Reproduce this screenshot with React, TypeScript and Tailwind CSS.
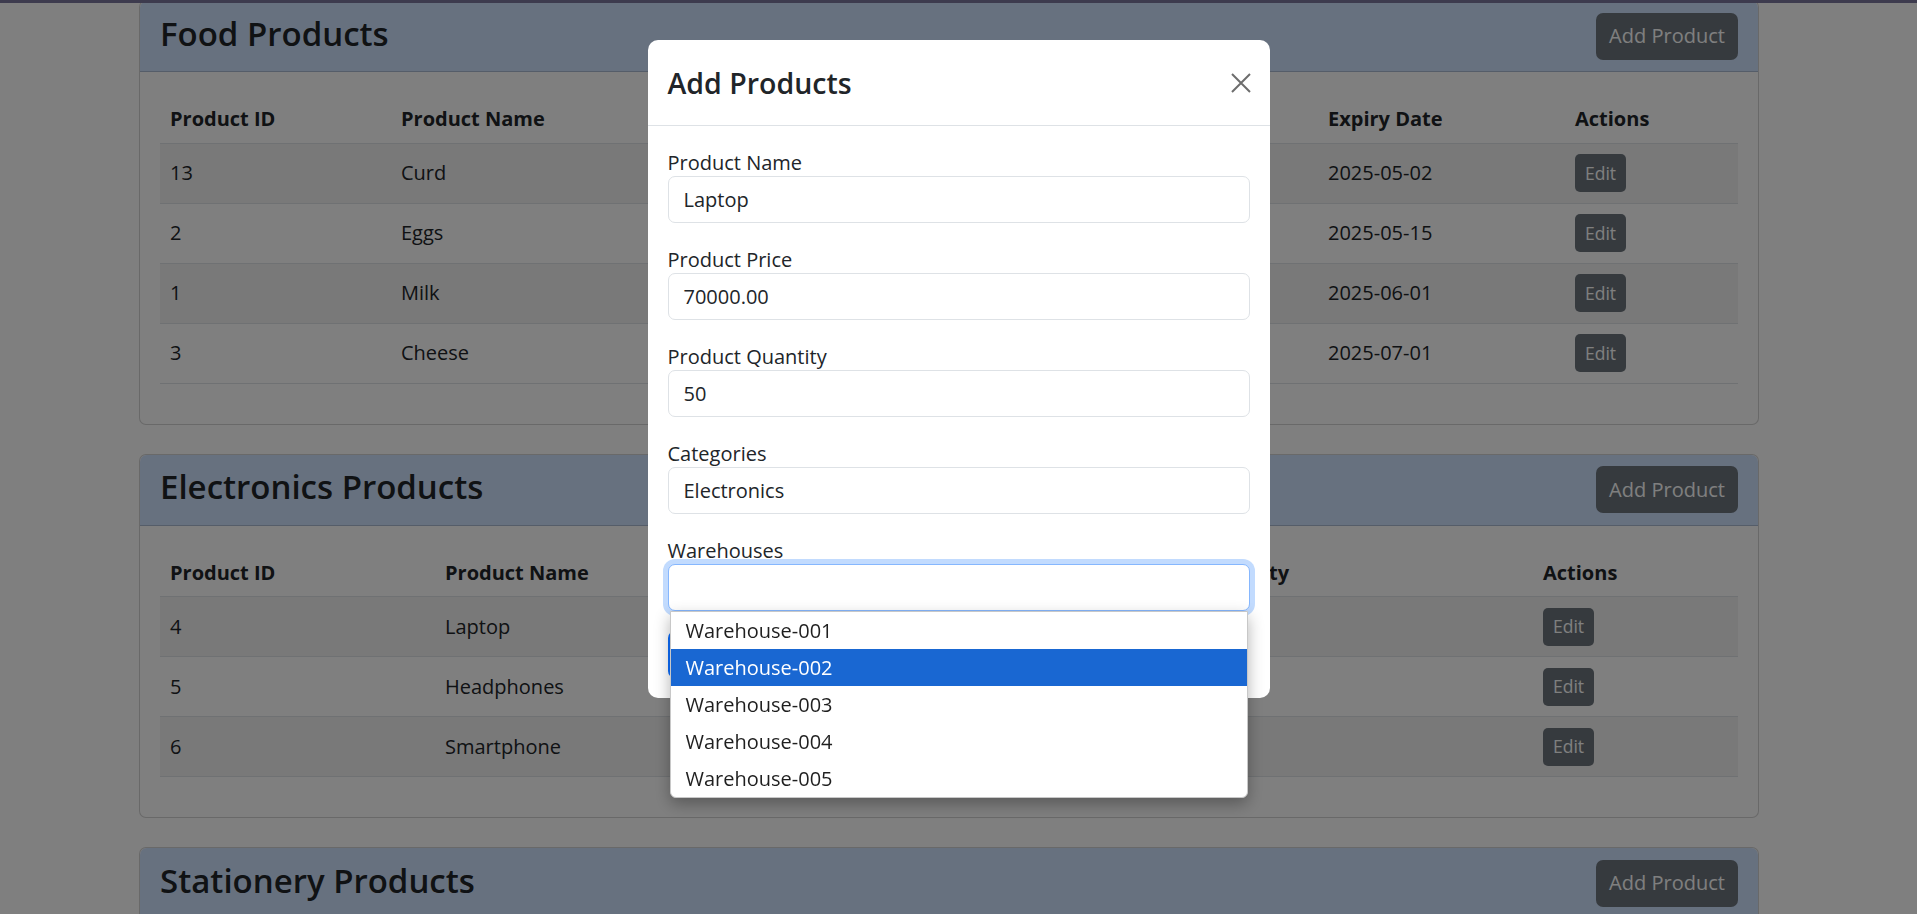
import { useState } from "react";

type Coluna = { titulo: string; largura: string };

type Secao = {
  titulo: string;
  colunas: Coluna[];
  linhas: string[][];
};

const secoes: Secao[] = [
  {
    titulo: "Food Products",
    colunas: [
      { titulo: "Product ID", largura: "w-[231px]" },
      { titulo: "Product Name", largura: "w-[300px]" },
      { titulo: "Product Price", largura: "w-[300px]" },
      { titulo: "Product Quantity", largura: "w-[327px]" },
      { titulo: "Expiry Date", largura: "w-[247px]" },
      { titulo: "Actions", largura: "w-[173px]" },
    ],
    linhas: [
      ["13", "Curd", "40.00", "100", "2025-05-02"],
      ["2", "Eggs", "6.00", "240", "2025-05-15"],
      ["1", "Milk", "30.00", "120", "2025-06-01"],
      ["3", "Cheese", "250.00", "40", "2025-07-01"],
    ],
  },
  {
    titulo: "Electronics Products",
    colunas: [
      { titulo: "Product ID", largura: "w-[275px]" },
      { titulo: "Product Name", largura: "w-[335px]" },
      { titulo: "Product Price", largura: "w-[336px]" },
      { titulo: "Product Quantity", largura: "w-[427px]" },
      { titulo: "Actions", largura: "w-[205px]" },
    ],
    linhas: [
      ["4", "Laptop", "70000.00", "50"],
      ["5", "Headphones", "2500.00", "150"],
      ["6", "Smartphone", "30000.00", "80"],
    ],
  },
  {
    titulo: "Stationery Products",
    colunas: [],
    linhas: [],
  },
];

const armazens = [
  "Warehouse-001",
  "Warehouse-002",
  "Warehouse-003",
  "Warehouse-004",
  "Warehouse-005",
];

function CardSecao({ secao }: { secao: Secao }) {
  return (
    <section className="mb-[29px] rounded-[7px] border border-black/[0.175] bg-white">
      <div className="flex h-[71px] items-center justify-between rounded-t-[7px] border-b border-black/[0.175] bg-[#cfe2ff] px-[20px]">
        <h2 className="pb-[5px] text-[33px] font-semibold leading-[42px] text-[#212529]">
          {secao.titulo}
        </h2>
        <button className="h-[47px] w-[142px] rounded-[7px] bg-[#6c757d] text-[20px] text-white">
          Add Product
        </button>
      </div>
      <div className="p-[20px]">
        {secao.colunas.length > 0 && (
          <table className="mb-[20px] w-full table-fixed border-collapse text-[20px] text-[#212529]">
            <thead>
              <tr>
                {secao.colunas.map((c) => (
                  <th
                    key={c.titulo}
                    className={`${c.largura} h-[51px] border-b border-[#dee2e6] px-[10px] pt-[4px] text-left font-bold whitespace-nowrap`}
                  >
                    {c.titulo}
                  </th>
                ))}
              </tr>
            </thead>
            <tbody>
              {secao.linhas.map((linha, i) => (
                <tr key={linha[0]} className={i % 2 === 0 ? "bg-black/5" : ""}>
                  {linha.map((valor, j) => (
                    <td
                      key={j}
                      className="h-[60px] border-b border-[#dee2e6] px-[10px] align-middle"
                    >
                      {valor}
                    </td>
                  ))}
                  <td className="h-[60px] border-b border-[#dee2e6] px-[10px] align-middle">
                    <button className="h-[38px] w-[51px] rounded-[5px] bg-[#6c757d] text-[17.5px] text-white">
                      Edit
                    </button>
                  </td>
                </tr>
              ))}
            </tbody>
          </table>
        )}
      </div>
    </section>
  );
}

function Campo({ rotulo, valor }: { rotulo: string; valor: string }) {
  return (
    <div className="mb-[20px]">
      <label className="block h-[30px] pt-[2px] text-[20px] leading-[30px] text-[#212529]">
        {rotulo}
      </label>
      <div className="flex h-[47px] items-center rounded-[7px] border border-[#dee2e6] bg-white px-[15px] text-[20px] text-[#212529]">
        {valor}
      </div>
    </div>
  );
}

export default function App() {
  const [selecionado] = useState(1);

  return (
    <div className="relative h-[914px] overflow-hidden bg-white font-['Open_Sans',sans-serif]">
      <div className="absolute inset-x-0 top-0 z-[1] h-[3px] bg-[#7a769c]" />
      <main className="ml-[139px] w-[1620px]">
        {secoes.map((s) => (
          <CardSecao key={s.titulo} secao={s} />
        ))}
      </main>

      <div className="fixed inset-0 z-10 bg-black/50" />

      <div className="fixed inset-0 z-20 flex justify-center pt-[40px]">
        <div className="h-fit w-[622px] rounded-[10px] bg-white">
          <div className="flex h-[86px] items-center justify-between border-b border-[#dee2e6] px-[20px]">
            <h4 className="pt-[2px] text-[28.5px] font-semibold leading-[45px] text-[#212529]">
              Add Products
            </h4>
            <svg width="20" height="20" viewBox="0 0 20 20" className="mr-[-1px]">
              <path
                d="M1 1 L19 19 M19 1 L1 19"
                stroke="#6d6d6d"
                strokeWidth="2"
                fill="none"
              />
            </svg>
          </div>
          <div className="px-[20px] pt-[20px] pb-[20px]">
            <Campo rotulo="Product Name" valor="Laptop" />
            <Campo rotulo="Product Price" valor="70000.00" />
            <Campo rotulo="Product Quantity" valor="50" />
            <Campo rotulo="Categories" valor="Electronics" />
            <div className="relative mb-[20px]">
              <label className="block h-[30px] pt-[2px] text-[20px] leading-[30px] text-[#212529]">
                Warehouses
              </label>
              <div className="h-[47px] rounded-[7px] border border-[#86b7fe] bg-white shadow-[0_0_0_5px_rgba(13,110,253,0.25)]" />
              <ul className="absolute top-full right-[2px] left-[2px] z-30 overflow-hidden rounded-b-[6px] border border-[#c8c8c8] bg-white shadow-[0_6px_16px_rgba(0,0,0,0.3)]">
                {armazens.map((a, i) => (
                  <li
                    key={a}
                    className={
                      i === selecionado
                        ? "h-[37px] bg-[#1967d2] px-[15px] text-[20px] leading-[37px] text-white"
                        : "h-[37px] px-[15px] text-[20px] leading-[37px] text-[#1f1f1f]"
                    }
                  >
                    {a}
                  </li>
                ))}
              </ul>
            </div>
            <button className="h-[47px] rounded-[7px] bg-[#0d6efd] px-[15px] text-[20px] text-white">
              Add Product
            </button>
          </div>
        </div>
      </div>
    </div>
  );
}
